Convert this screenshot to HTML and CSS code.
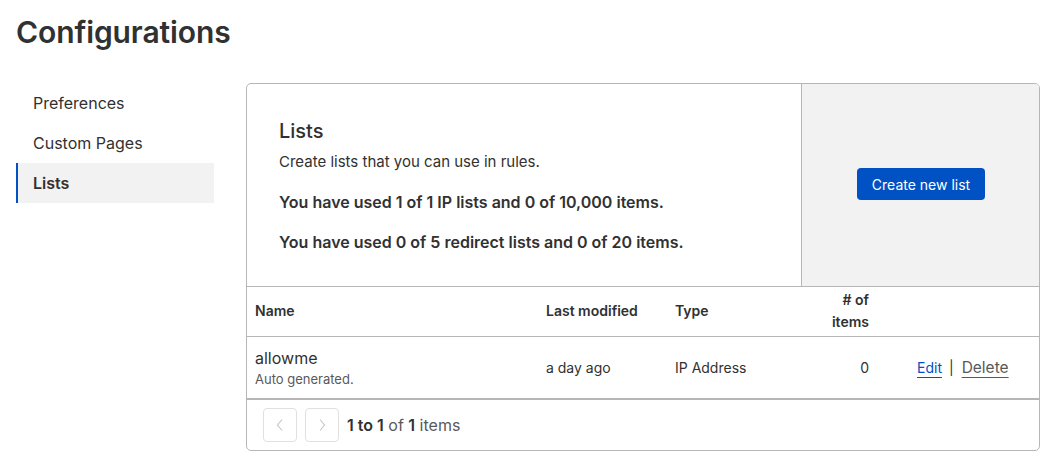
FILE: index.html
```html
<!DOCTYPE html>
<html>
<head>
<meta charset="utf-8">
<link rel="stylesheet" href="styles.css">
</head>
<body>
<h1 class="title">Configurations</h1>
<div class="layout">
  <nav class="sidenav">
    <a class="nav-item">Preferences</a>
    <a class="nav-item">Custom Pages</a>
    <a class="nav-item active">Lists</a>
  </nav>
  <section class="card">
    <div class="card-top">
      <div class="card-info">
        <h2 class="card-title">Lists</h2>
        <p class="card-desc">Create lists that you can use in rules.</p>
        <p class="card-usage">You have used 1 of 1 IP lists and 0 of 10,000 items.</p>
        <p class="card-usage">You have used 0 of 5 redirect lists and 0 of 20 items.</p>
      </div>
      <div class="card-action">
        <button class="btn-primary">Create new list</button>
      </div>
    </div>
    <table class="lists-table">
      <thead>
        <tr>
          <th class="col-name">Name</th>
          <th class="col-mod">Last modified</th>
          <th class="col-type">Type</th>
          <th class="col-num">#&nbsp;of<br>items</th>
          <th class="col-act"></th>
        </tr>
      </thead>
      <tbody>
        <tr>
          <td class="col-name"><div class="item-name">allowme</div><div class="item-desc">Auto generated.</div></td>
          <td class="col-mod">a day ago</td>
          <td class="col-type">IP Address</td>
          <td class="col-num">0</td>
          <td class="col-act"><a class="link-edit">Edit</a><span class="sep">|</span><a class="link-delete">Delete</a></td>
        </tr>
      </tbody>
    </table>
    <div class="pager">
      <button class="pager-btn" aria-label="Previous"><svg width="10" height="14" viewBox="0 0 10 14"><path d="M7 1.5 L2.5 7 L7 12.5" fill="none" stroke="#c4c4c4" stroke-width="1.1"/></svg></button>
      <button class="pager-btn" aria-label="Next"><svg width="10" height="14" viewBox="0 0 10 14"><path d="M3 1.5 L7.5 7 L3 12.5" fill="none" stroke="#c4c4c4" stroke-width="1.1"/></svg></button>
      <span class="pager-text"><b>1 to 1</b> of <b>1</b> items</span>
    </div>
  </section>
</div>
</body>
</html>
```
FILE: styles.css
```css
* { box-sizing: border-box; }
body {
  margin: 0;
  padding: 0 12px 0 16px;
  font-family: Inter, "Noto Sans", sans-serif;
  color: #313131;
  background: #fff;
}
.title {
  margin: 0;
  padding-top: 13px;
  font-size: 30px;
  font-weight: 600;
  line-height: 38px;
  letter-spacing: -0.1px;
  color: #313131;
}
.layout {
  display: flex;
  gap: 32px;
  margin-top: 32px;
}
.sidenav {
  width: 198px;
  flex: none;
  display: flex;
  flex-direction: column;
}
.nav-item {
  display: block;
  height: 40px;
  line-height: 40px;
  padding-left: 17px;
  font-size: 16px;
  color: #313131;
}
.nav-item.active {
  background: #f2f2f2;
  border-left: 2px solid #0051c3;
  padding-left: 15px;
  font-weight: 600;
}
.card {
  flex: 1;
  border: 1px solid #b6b6b6;
  border-radius: 5px;
  overflow: hidden;
  height: 368px;
}
.card-top {
  display: flex;
  height: 203px;
  border-bottom: 1px solid #b6b6b6;
}
.card-info {
  flex: 1;
  padding: 33px 32px 0 32px;
}
.card-title {
  margin: 0;
  font-size: 20px;
  font-weight: 500;
  line-height: 28px;
}
.card-desc {
  margin: 6px 0 0 0;
  font-size: 15px;
  line-height: 22px;
}
.card-usage {
  margin: 18px 0 0 0;
  font-size: 16px;
  font-weight: 600;
  line-height: 22px;
}
.card-action {
  width: 238px;
  flex: none;
  background: #f2f2f2;
  border-left: 1px solid #b6b6b6;
  display: flex;
  align-items: center;
  justify-content: center;
  padding-left: 1px;
}
.btn-primary {
  width: 128px;
  height: 32px;
  border: none;
  border-radius: 4px;
  background: #0051c3;
  color: #fff;
  font-family: inherit;
  font-size: 14px;
  padding: 0;
  margin-bottom: 2px;
}
.lists-table {
  width: 100%;
  border-collapse: collapse;
}
.lists-table th {
  font-size: 14px;
  font-weight: 600;
  text-align: left;
  height: 49px;
  padding: 0 9px;
  line-height: 22px;
  border-bottom: 1px solid #b6b6b6;
  vertical-align: middle;
}
.lists-table td {
  font-size: 14px;
  height: 63px;
  padding: 1px 9px 0 9px;
  border-bottom: 2px solid #b6b6b6;
  vertical-align: middle;
}
.lists-table .col-name { width: 290px; padding-left: 8px; }
.col-mod { width: 129px; }
.col-type { width: 129px; }
.lists-table .col-num { width: 83px; text-align: right; }
.item-name { font-size: 16px; line-height: 22px; margin-top: 0; }
.item-desc { font-size: 13px; line-height: 20px; color: #595959; }
.col-act { padding-left: 39px !important; white-space: nowrap; }
.link-edit {
  color: #0051c3;
  text-decoration: underline;
  text-underline-offset: 4px;
  text-decoration-thickness: 1px;
}
.sep { margin: 0 8px 0 7px; color: #313131; }
.link-delete {
  font-size: 15.5px;
  color: #595959;
  text-decoration: underline;
  text-underline-offset: 4px;
  text-decoration-thickness: 1px;
}
.pager {
  display: flex;
  align-items: center;
  gap: 8px;
  padding: 8px 16px;
}
.pager-btn {
  width: 34px;
  height: 34px;
  border: 1px solid #e0e0e0;
  border-radius: 4px;
  background: #fff;
  display: flex;
  align-items: center;
  justify-content: center;
  padding: 0;
}
.pager-text {
  margin-left: 0;
  font-size: 16px;
  color: #595959;
  margin-top: -1px;
}
.pager-text b { font-weight: 600; color: #313131; }
```
